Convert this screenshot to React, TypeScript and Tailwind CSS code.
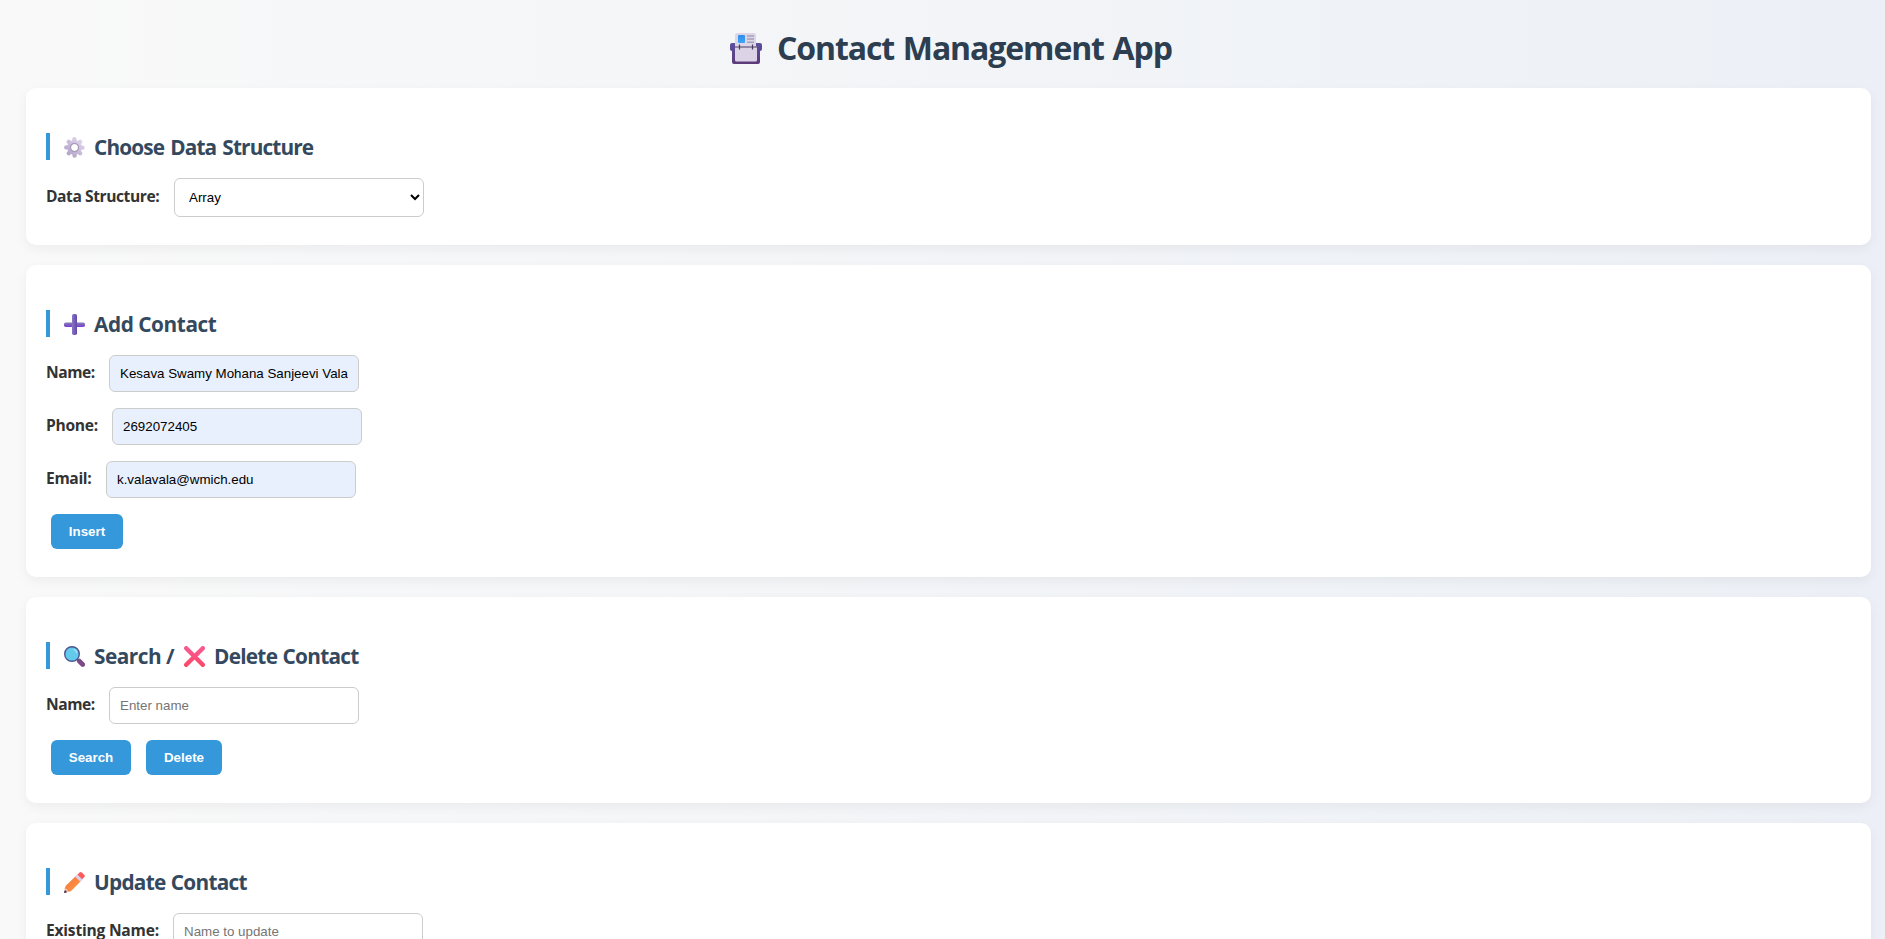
import React from "react";

function CardIndexIcon() {
  return (
    <svg width="32" height="32" viewBox="0 0 32 32" className="shrink-0">
      <defs>
        <linearGradient id="boxBody" x1="0" y1="0" x2="0" y2="1">
          <stop offset="0" stopColor="#5b50a0" />
          <stop offset="1" stopColor="#5d3a78" />
        </linearGradient>
        <linearGradient id="photo" x1="0" y1="0" x2="0" y2="1">
          <stop offset="0" stopColor="#2f8ee8" />
          <stop offset="1" stopColor="#3fa5f8" />
        </linearGradient>
      </defs>
      <path d="M2 10h28q2 0 2 2v4q0 2-2 2v11q0 2-2 2H4q-2 0-2-2V18q-2 0-2-2v-4q0-2 2-2z" fill="url(#boxBody)" />
      <rect x="5" y="0" width="21" height="16" rx="2" fill="#ddd5e8" />
      <rect x="8" y="2" width="7" height="8" rx="1" fill="url(#photo)" />
      <path d="M17 3h7M17 6h7M17 9.200h7" stroke="#aaa0b5" strokeWidth="1.500" />
      <path d="M5 13.500h22v13.500q0 1.500-1.500 1.500h-19Q5 28.500 5 27z" fill="#ddd3e7" />
      <path d="M5 14h22" stroke="#665678" strokeWidth="1.200" />
      <path d="M9.500 11.500v5M22.500 11.500v5" stroke="#493d59" strokeWidth="1.200" />
    </svg>
  );
}

function GearIcon() {
  return (
    <svg width="21" height="21" viewBox="0 0 21 21" className="shrink-0">
      <defs>
        <linearGradient id="gear" gradientUnits="userSpaceOnUse" x1="17" y1="3" x2="4" y2="18">
          <stop offset="0" stopColor="#dfd5ec" />
          <stop offset="1" stopColor="#b3a4c9" />
        </linearGradient>
      </defs>
      <g stroke="url(#gear)" strokeWidth="4.400" strokeLinecap="round">
        <path d="M10.400 2.300L10.600 5M10.400 16l.2 2.500" />
        <path d="M2.300 10.400L5 10.600M16 10.400l2.500.2" />
        <path d="M4.800 4.800l2 2M14.200 14.200l2 2M4.800 16.200l2-2M14.200 6.800l2-2" />
      </g>
      <circle cx="10.500" cy="10.500" r="5.300" fill="none" stroke="url(#gear)" strokeWidth="4" />
      <circle cx="10.500" cy="10.500" r="3.900" fill="none" stroke="#a497b5" strokeWidth="1.400" />
      <circle cx="10.500" cy="10.500" r="3.200" fill="#fff" />
    </svg>
  );
}

function PlusIcon() {
  return (
    <svg width="21" height="21" viewBox="0 0 21 21" className="shrink-0">
      <defs>
        <linearGradient id="plusH" x1="0" y1="0" x2="0" y2="1">
          <stop offset="0" stopColor="#8a7cb8" />
          <stop offset="0.500" stopColor="#7a62bd" />
          <stop offset="1" stopColor="#8338d8" />
        </linearGradient>
        <linearGradient id="plusV" x1="0" y1="0" x2="1" y2="0">
          <stop offset="0" stopColor="#8877c4" />
          <stop offset="1" stopColor="#6247a8" />
        </linearGradient>
      </defs>
      <rect x="0" y="8.500" width="21" height="4.500" rx="1.800" fill="url(#plusH)" />
      <rect x="8" y="0" width="5" height="21" rx="1.800" fill="url(#plusV)" />
    </svg>
  );
}

function SearchIcon() {
  return (
    <svg width="21" height="21" viewBox="0 0 21 21" className="shrink-0">
      <path d="M13.200 13.200l1.800 1.800" stroke="#5a4a80" strokeWidth="2" />
      <path d="M15.200 15l3.500 3.500" stroke="#7d4a88" strokeWidth="4.600" strokeLinecap="round" />
      <circle cx="8" cy="8" r="7.300" fill="#62cbec" stroke="#4c5590" strokeWidth="1.400" />
      <path d="M10 3.500q2.400.8 2.700 3" stroke="#a8e6f8" strokeWidth="1.300" fill="none" strokeLinecap="round" />
    </svg>
  );
}

function CrossIcon() {
  return (
    <svg width="21" height="21" viewBox="0 0 21 21" className="shrink-0">
      <defs>
        <linearGradient id="cross" gradientUnits="userSpaceOnUse" x1="0" y1="0" x2="0" y2="21">
          <stop offset="0" stopColor="#f95a96" />
          <stop offset="1" stopColor="#fb4766" />
        </linearGradient>
      </defs>
      <path d="M2.200 2.200l16.600 16.600M18.800 2.200L2.200 18.800" stroke="url(#cross)" strokeWidth="4.400" strokeLinecap="round" />
    </svg>
  );
}

function PencilIcon() {
  return (
    <svg width="21" height="21" viewBox="0 0 21 21" className="shrink-0">
      <defs>
        <linearGradient id="pencil" x1="0" y1="0" x2="1" y2="1">
          <stop offset="0" stopColor="#f5733c" />
          <stop offset="1" stopColor="#ff9a45" />
        </linearGradient>
      </defs>
      <path d="M1.800 13.800L12.300 3.600l5.200 5L6.800 19.200l-3 .8-3.300-3z" fill="url(#pencil)" />
      <path d="M1.200 16.200l1.700.8.6 1.200 1.500 1.400L0 21z" fill="#eebfae" />
      <path d="M.8 18L0 21l3.200-.8z" fill="#3d2447" />
      <path d="M11.200 4.700l2.600-2.500 5.200 5-2.600 2.600z" fill="#ddd3ec" />
      <path d="M13.400 2.600L15.700.5q1.100-.9 2.100 0l2.600 2.500q1 1 0 2L18 7.300z" fill="#fb5c5c" />
    </svg>
  );
}

function Heading({ children }: { children: React.ReactNode }) {
  return (
    <h2 className="mt-[25px] mb-[18px] flex h-[27px] items-center border-l-4 border-[#3498db] pt-[2px] pl-[14px] text-[20.800px] font-bold whitespace-nowrap text-[#34495e]">
      {children}
    </h2>
  );
}

function Card({ className = "", children }: { className?: string; children: React.ReactNode }) {
  return (
    <section className={`mb-5 rounded-[10px] bg-white p-5 shadow-[0_4px_12px_rgba(0,0,0,0.05)] ${className}`}>
      {children}
    </section>
  );
}

function Field({
  label,
  labelClass,
  autofilled,
  ...input
}: { label: string; labelClass: string; autofilled?: boolean } & React.InputHTMLAttributes<HTMLInputElement>) {
  return (
    <div className="mb-4 flex h-[37px] items-center">
      <label className={`shrink-0 pb-[2px] text-[15.600px] font-bold whitespace-nowrap text-[#333] ${labelClass}`}>
        {label}
      </label>
      <input
        {...input}
        className={`h-[37px] w-[250px] rounded-[6px] border border-[#ccc] px-[10px] font-['Liberation_Sans',Arial,sans-serif] text-[13.333px] text-black outline-none placeholder:text-[#757575] ${autofilled ? "bg-[#e8f0fe]" : "bg-white"}`}
      />
    </div>
  );
}

function Button({ className, children }: { className: string; children: React.ReactNode }) {
  return (
    <button
      className={`h-[35px] rounded-[6px] bg-[#3498db] font-['Liberation_Sans',Arial,sans-serif] text-[13.333px] font-bold text-white ${className}`}
    >
      {children}
    </button>
  );
}

export default function App() {
  return (
    <div className="h-[939px] overflow-hidden bg-[linear-gradient(to_right,#f9f9f9,#ecf0f6)] pr-[14px] pl-[26px] font-['Open_Sans','Noto_Sans',sans-serif]">
      <h1 className="flex h-[88px] items-center pt-[9px] pl-[704px] text-[32px] font-bold whitespace-nowrap text-[#2c3e50]">
        <CardIndexIcon />
        <span className="mb-px ml-[15px] tracking-[-1.100px] [word-spacing:1.500px]">Contact Management App</span>
      </h1>

      <Card className="h-[157px]">
        <Heading>
          <GearIcon />
          <span className="ml-[9px] tracking-[-0.860px] [word-spacing:1.500px]">Choose Data Structure</span>
        </Heading>
        <div className="flex h-[39px] items-center">
          <label className="w-[128px] shrink-0 pb-px text-[15.600px] font-bold tracking-[-0.430px] whitespace-nowrap text-[#333]">
            Data Structure:
          </label>
          <select className="h-[39px] w-[250px] rounded-[6px] border border-[#ccc] bg-white px-[10px] font-['Liberation_Sans',Arial,sans-serif] text-[13.333px] text-black">
            <option>Array</option>
          </select>
        </div>
      </Card>

      <Card className="h-[312px]">
        <Heading>
          <PlusIcon />
          <span className="ml-[9px] tracking-[-0.440px]">Add Contact</span>
        </Heading>
        <Field label="Name:" labelClass="w-[63px] tracking-[-0.450px]" defaultValue="Kesava Swamy Mohana Sanjeevi Vala" autofilled />
        <Field label="Phone:" labelClass="w-[66px] tracking-[-0.300px]" defaultValue="2692072405" autofilled />
        <Field label="Email:" labelClass="w-[60px] tracking-[-0.350px]" defaultValue="k.valavala@wmich.edu" autofilled />
        <Button className="ml-[5px] w-[72px]">Insert</Button>
      </Card>

      <Card className="h-[206px]">
        <Heading>
          <SearchIcon />
          <span className="ml-[9px] w-[90px] tracking-[-0.500px]">Search /</span>
          <CrossIcon />
          <span className="ml-[9px] tracking-[-0.740px] [word-spacing:0.700px]">Delete Contact</span>
        </Heading>
        <Field label="Name:" labelClass="w-[63px] tracking-[-0.450px]" placeholder="Enter name" />
        <div className="flex gap-[15px] pl-[5px]">
          <Button className="w-[80px]">Search</Button>
          <Button className="w-[76px]">Delete</Button>
        </div>
      </Card>

      <Card className="h-[300px]">
        <Heading>
          <PencilIcon />
          <span className="ml-[9px] tracking-[-0.740px] [word-spacing:0.700px]">Update Contact</span>
        </Heading>
        <Field label="Existing Name:" labelClass="w-[127px] tracking-[-0.220px]" placeholder="Name to update" />
      </Card>
    </div>
  );
}
